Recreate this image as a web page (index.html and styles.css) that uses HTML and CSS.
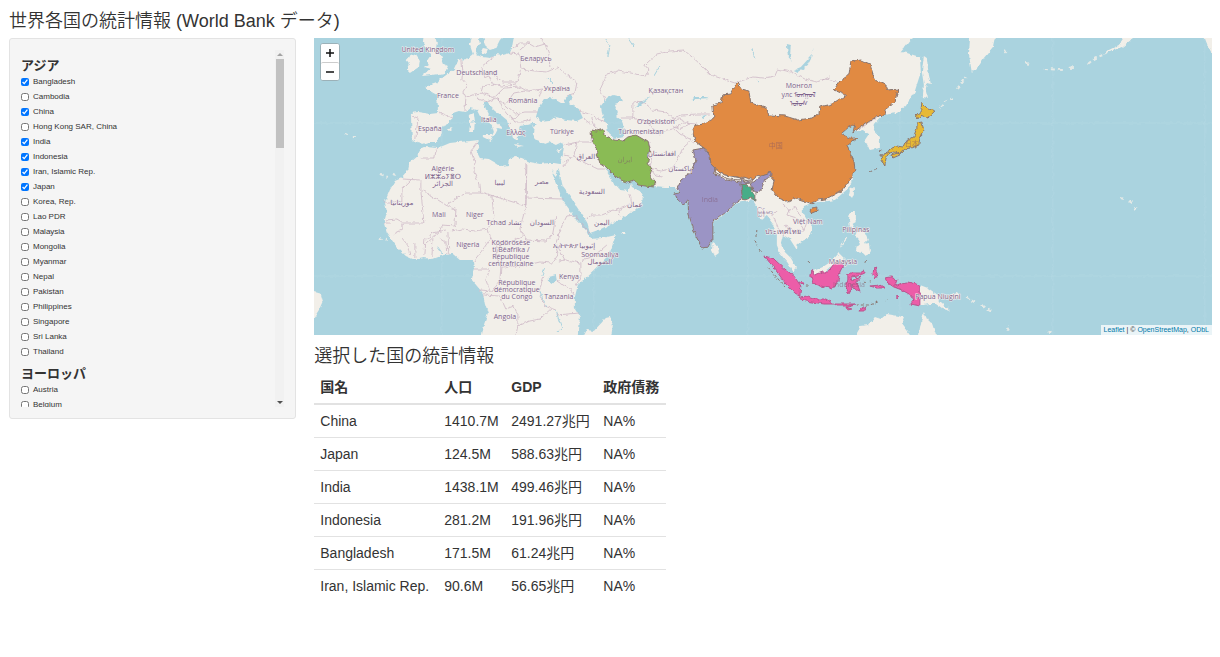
FILE: index.html
```
<!DOCTYPE html>
<html lang="ja">
<head>
<meta charset="utf-8">
<meta name="viewport" content="width=device-width, initial-scale=1">
<title>世界各国の統計情報</title>
<link rel="stylesheet" href="styles.css">
</head>
<body>
<h1 class="title">世界各国の統計情報 (World Bank データ)</h1>
<div class="layout">
  <form class="well">
    <div class="country-list">
      <fieldset class="region">
        <legend>アジア</legend>
        <label><input type="checkbox" checked>Bangladesh</label>
        <label><input type="checkbox">Cambodia</label>
        <label><input type="checkbox" checked>China</label>
        <label><input type="checkbox">Hong Kong SAR, China</label>
        <label><input type="checkbox" checked>India</label>
        <label><input type="checkbox" checked>Indonesia</label>
        <label><input type="checkbox" checked>Iran, Islamic Rep.</label>
        <label><input type="checkbox" checked>Japan</label>
        <label><input type="checkbox">Korea, Rep.</label>
        <label><input type="checkbox">Lao PDR</label>
        <label><input type="checkbox">Malaysia</label>
        <label><input type="checkbox">Mongolia</label>
        <label><input type="checkbox">Myanmar</label>
        <label><input type="checkbox">Nepal</label>
        <label><input type="checkbox">Pakistan</label>
        <label><input type="checkbox">Philippines</label>
        <label><input type="checkbox">Singapore</label>
        <label><input type="checkbox">Sri Lanka</label>
        <label><input type="checkbox">Thailand</label>
      </fieldset>
      <fieldset class="region">
        <legend>ヨーロッパ</legend>
        <label><input type="checkbox">Austria</label>
        <label><input type="checkbox">Belgium</label>
      </fieldset>
    </div>
    <div class="scrollbar" aria-hidden="true">
      <span class="arrow-up"></span>
      <span class="thumb"></span>
      <span class="arrow-down"></span>
    </div>
  </form>
  <main class="main">
    <div class="map">
      <svg class="map-canvas" viewBox="314 38 898 297" preserveAspectRatio="xMidYMid slice" role="img" aria-label="World map">
        <defs>
          <filter id="coast" filterUnits="userSpaceOnUse" x="304" y="28" width="918" height="317">
            <feTurbulence type="fractalNoise" baseFrequency="0.22" numOctaves="2" seed="4" result="noise"/>
            <feDisplacementMap in="SourceGraphic" in2="noise" scale="4" xChannelSelector="R" yChannelSelector="G"/>
          </filter>
        </defs>
        <g filter="url(#coast)">
        <g class="land">
          <path d="M411 113L412 140L418 143L422 144L428 142L437 142L442 134L441 131L446 124L453 118L453 113L459 111L465 112L470 108L477 110L480 116L487 121L492 125L494 132L492 136L495 135L498 129L502 130L502 127L495 121L489 115L486 109L484 103L487 101L489 105L494 110L501 115L507 120L509 127L512 132L513 138L518 140L518 135L522 134L519 129L520 126L526 125L532 124L534 128L533 134L537 141L545 144L550 142L556 145L562 142L564 147L563 154L560 164L554 163L548 163L540 164L530 162L522 158L514 157L509 160L508 166L502 167L496 163L489 159L480 158L477 152L480 146L477 143L479 140L470 141L459 142L450 143L438 148L425 147L421 149L417 156L410 162L408 171L402 178L395 181L390 190L385 202L387 212L384 223L387 233L397 247L406 256L415 260L424 258L433 259L444 255L453 254L460 260L473 260L474 267L472 280L483 293L485 304L488 313L484 325L482 335V345H579V335L580 316L575 308L575 297L578 285L597 267L606 258L611 250L616 235L603 238L590 239L586 230L577 221L570 210L563 201L559 190L551 170L556 176L559 169L563 187L570 196L577 207L587 222L590 233L601 229L613 223L624 217L633 212L640 205L644 198L640 191L632 187L631 183L629 191L620 190L618 187L614 184L609 174L605 168L612 172L623 182L633 180L639 186L653 186L665 187L674 187L682 195L687 200L690 215L695 233L703 248L711 243L713 223L725 214L737 203L753 200L757 207L762 220L767 216L773 224L777 235L777 245L780 253L788 263L793 272L796 267L791 258L785 252L781 243L783 235L790 239L797 250L798 243L809 238L812 228L803 213L803 206L812 203L835 200L850 187L855 168L851 158L844 147L857 138L848 137L841 133L848 127L855 125L853 132L863 130L869 134L865 140L870 150L880 148L880 137L874 130L875 124L883 115L897 113L906 106L915 91L921 72L920 57L907 53L901 52L913 37V28H514V37L512 48L510 53L503 55L496 54L490 58L482 57L477 55L475 50L480 43L479 37V28H472V37L470 45L473 54L467 59L458 60L454 69L445 76L440 79L437 83L425 87L430 91L437 95L438 106L438 113L430 114L418 112Z"/>
          <path d="M483 28V37L486 47L490 50L496 48L500 40L503 37V28ZM483 48L481 52L486 54L488 49ZM425 28L423 43L427 49L431 55L427 61L429 64L425 67L430 69L422 76L432 75L445 73L448 66L444 64L441 56L436 49L437 43L433 28ZM410 57L406 59L409 63L407 70L410 73L419 67L420 60L416 54Z"/>
          <path d="M470 115L474 113L475 121L470 122ZM471 123L475 122L474 132L469 132ZM483 135L493 135L491 141L483 137ZM515 144L524 146L518 147ZM556 151L563 148L559 152ZM447 129L454 128L449 131Z"/>
          <path d="M713 243L718 246L719 253L715 256L712 250ZM850 190L854 187L854 195L851 199L849 195ZM850 212L856 212L856 220L853 227L860 230L857 232L851 229L849 221ZM857 232L864 231L868 240L862 246L859 240L855 236ZM840 248L847 239L847 237L841 245ZM856 247L862 244L869 243L870 251L867 256L863 252L855 251ZM811 272L823 267L832 261L839 253L845 259L841 263L837 265L830 267L821 275L813 273Z"/>
          <path d="M924 56L927 58L929 75L931 84L927 83L926 90L928 98L923 97L924 85L922 72ZM971 28L969 54L972 73L979 66L984 58L993 47L997 28ZM856 345V335L861 326L869 325L875 317L881 319L887 314L904 317L902 323L911 335V345ZM919 345V335L922 318L924 312L928 321L932 323L936 335V345ZM920 285L928 288L938 295L940 301L951 311L943 309L936 304L929 304L920 306ZM947 296L957 292L960 295L954 299ZM304 292L314 292L321 294L323 301L319 310L314 318L304 318ZM579 345L587 330L594 331L606 318L610 317L613 325L610 345ZM1201 28L1222 28L1214 57L1208 46ZM1130 28L1119 45L1109 50L1104 55L1113 50L1122 47L1132 39L1143 28Z"/>
          <path class="islands" d="M940 108L945 102L953 98M957 89L966 77M1004 50L1007 53M1026 63L1029 64M1044 69L1064 70M1070 68L1074 67M1088 64L1094 59L1105 54M1121 198L1124 199M1129 201L1134 204M966 296L971 300L976 303M982 305L992 311M1007 327L1010 332M1048 333L1052 331M379 238L387 240M344 133L348 134M352 137L356 137M380 174L388 177M393 174L396 175"/>
          <path d="M1133 206L1138 208L1135 210ZM621 232L626 232L624 234Z"/>
        </g>
        <g class="water">
          <path d="M536 117L539 107L544 99L550 97L555 100L560 103L565 103L564 99L570 95L573 98L569 103L579 109L583 118L577 121L567 120L556 117L549 121L541 122Z"/>
          <path d="M601 106L607 98L613 95L621 97L623 101L615 104L618 112L616 117L622 121L625 129L624 137L615 139L608 133L607 124L603 117Z"/>
          <path d="M549 282L549 277L556 275L557 281L552 284ZM794 70L801 67L811 56L814 47L811 58L807 66L798 72ZM691 101L694 97L706 97L710 98L697 99ZM700 116L707 115L704 118ZM635 107L641 102L650 97L640 106ZM787 44L791 45L790 57L793 61L788 57ZM530 123L537 123L534 126Z"/>
          <path class="rivers" d="M540 291L544 301L548 307M556 310L559 320L562 328L558 332M438 247L443 254M606 39L610 46L608 57M628 38L634 47M548 78L554 84M545 268L542 276M654 76L660 66M752 49L755 58M756 79L760 83"/>
        </g>
        <g class="borders">
          <path d="M412 116L418 118L416 139M439 112L453 118M462 60L463 72L462 79L467 85L463 92L466 98L465 111M465 98L475 94L481 93L483 86L493 84L489 76L484 78L482 67L491 60L493 55M493 84L502 86L516 84L519 77L521 67L519 54L510 53M491 73L503 82L518 82M481 93L495 97L504 88L520 87L527 91L542 89L539 98M475 94L478 99L488 102L496 98L506 105L516 114L525 112L538 112M498 98L503 109L508 115L514 119L519 114M506 104L514 93L525 91M510 115L515 122L525 122L531 118M512 123L507 128M521 69L535 71L547 72L558 67L568 76L577 83L575 93L567 96M519 51L528 43L535 47L545 44L549 54L550 67M513 48L520 43L530 43M545 44L540 37M580 111L592 115L599 119L606 122M591 118L594 126L599 130M564 145L579 142L591 142L593 128M584 119L591 124M577 142L574 156L563 162M574 156L581 161L598 169L604 169M564 155L572 157L563 167M605 100L600 89L607 74L618 71L631 73L646 76L649 70L645 65L657 54L670 51L684 50L698 62L711 75L720 78L735 83"/>
          <path d="M735 83L753 77L764 78L775 76L778 69L791 72L805 79L817 82L830 77M633 118L633 102L645 103L653 110L666 112L673 118L682 115L697 114L710 114M621 118L633 118M633 118L645 121L653 128L660 134L667 130L673 129L684 123L697 124M675 129L680 134L690 139L695 143M649 142L652 156L650 168L656 176L662 177M650 168L661 171L671 169L678 159L683 148L692 140M670 120L680 119L690 124L679 129L673 126"/>
          <path d="M421 158L435 158L436 150L438 148M478 142L471 151L475 162L474 172L480 184L481 193M402 179L421 180L421 189L446 205L466 193L484 193L526 206L526 164M526 198L564 199M527 165L526 206L520 229L526 240L546 241L553 233L556 216M384 202L402 202L402 189L411 180M421 190L424 223L402 223L402 230L394 234M402 222L397 219L386 220M446 205L456 210L455 226L443 225L437 234L425 245M425 238L424 256M448 231L449 255M415 243L415 258M433 239L432 257M440 238L446 242L447 254M451 231L463 229L475 231L488 229L491 238L484 248L474 261M492 195L494 217L488 229M491 238L498 247L512 241L523 236M500 245L495 256L501 267L523 266L540 262L552 263L558 254L556 246M501 267L500 281L492 292L483 293M474 269L490 269L486 280L490 291L480 290M483 295L500 296L506 309L514 306L518 315L518 326L530 321L540 319L552 308M518 326L516 335M544 276L539 292L545 306L556 310M557 315L579 313M557 281L571 290L575 296M581 263L581 276L576 286M559 261L566 260L580 263L585 259L594 256L607 245M567 216L562 226L556 243L565 260M567 216L575 215L590 234M587 218L592 215L602 215L619 208L620 217M620 209L632 204L630 193M384 223L390 223M402 238L407 244L410 255M427 240L432 233L446 230"/>
          <path d="M778 210L773 215L778 228L784 235M783 204L790 210L796 207L799 214L807 222L804 231L796 231L785 226M790 210L787 215L797 218L804 230M820 81L825 79L837 81M860 129L873 120L881 115"/>
        </g>
        <g class="tile-seams"><path d="M304 123H1222M304 276H1222M442 28V345M594 28V345M748 28V345M900 28V345M1053 28V345M1205 28V345"/></g>
        <g class="selected">
          <path class="china" d="M692 130L694 126L703 124L714 118L713 105L721 103L723 95L730 94L735 86L738 83L742 89L749 91L751 103L766 108L769 115L785 116L798 120L812 118L819 114L820 107L832 104L846 95L834 90L840 81L849 75L851 62L861 60L870 64L875 80L886 85L888 90L898 89L895 102L887 107L885 115L877 116L870 121L858 129L853 133L855 124L849 127L841 134L850 138L857 138L847 146L854 160L855 170L850 180L841 191L826 199L818 200L812 204L805 201L796 198L788 202L779 198L772 190L775 179L766 174L757 176L753 180L741 178L726 175L715 169L709 162L707 150L696 142Z"/>
          <path class="china" d="M812 208L817 207L817 211L812 213L810 210Z"/>
          <path class="india" d="M693 150L704 148L709 154L710 163L715 168L714 173L726 180L741 182L742 179L745 182L754 182L762 175L771 172L771 176L765 180L761 190L757 193L753 190L750 183L743 184L741 189L744 197L737 202L725 213L713 222L713 239L708 247L702 248L696 236L689 215L688 201L683 204L676 198L674 194L680 193L677 188L681 180L690 174L696 160Z"/>
          <path class="gap" d="M715 169L726 175L741 178L740 180L728 179L715 172ZM744 177L753 180L751 181L744 180Z"/>
          <path class="bangladesh" d="M741 183L745 184L748 187L753 187L752 192L755 194L755 202L752 197L744 200L742 194Z"/>
          <path class="iran" d="M591 130L597 131L604 129L605 135L614 140L623 141L628 137L636 135L648 142L650 148L648 163L652 169L650 175L656 182L653 187L638 185L634 180L628 182L621 180L613 174L606 167L600 163L597 153L596 146L592 139Z"/>
          <path class="japan" d="M922 102L929 109L935 111L931 115L927 118L921 115L918 119L916 115L921 111ZM917 123L922 122L924 131L920 139L919 145L912 148L905 149L900 154L895 152L889 153L886 159L885 165L882 160L881 155L887 153L890 149L897 146L903 147L906 141L914 137L917 129ZM891 155L898 153L900 155L893 158Z"/>
          <path class="indonesia" d="M765 256L774 259L785 269L794 276L801 286L800 296L795 293L786 284L778 273ZM799 297L808 296L816 299L826 299L834 304L824 304L806 301ZM812 270L815 275L823 272L828 272L834 264L839 261L843 266L840 272L838 282L833 289L821 286L813 283L811 276ZM848 275L851 273L860 273L865 270L865 273L858 276L851 277L852 281L861 277L857 282L860 291L855 289L851 284L852 289L849 294L846 287L848 280ZM885 278L891 277L897 280L895 286L902 283L908 282L920 285L920 306L911 304L914 300L911 295L902 290L894 287L888 283ZM874 268L877 266L876 271L878 275L875 279L873 275ZM870 286L880 285L885 288L877 288ZM835 304L846 304L855 304L848 306L837 306ZM859 311L866 306L863 311ZM846 307L852 309L848 310ZM897 295L899 297L897 299ZM799 282L803 283L802 285Z"/>
          <path class="small-isles" d="M757 229L756 238M755 240L758 247L761 252M768 267L774 274L780 281L785 287M806 285L811 285M808 261L810 263M870 172L878 168M881 149L880 158M864 281L870 282M886 301L888 300M856 305L870 305L878 302M867 260L866 263"/>
        </g>
        </g>
        <g class="labels">
          <text x="428" y="52">United Kingdom</text><text x="477" y="75">Deutschland</text><text x="448" y="98">France</text><text x="430" y="131">España</text><text x="489" y="122">Italia</text><text x="516" y="135">Ελλάς</text><text x="523" y="103">România</text><text x="536" y="61">Беларусь</text><text x="557" y="91">Україна</text><text x="562" y="134">Türkiye</text><text x="666" y="93">Қазақстан</text><text x="656" y="124">O‘zbekiston</text><text x="641" y="134">Türkmenistan</text><text x="799" y="88">Монгол</text><text x="799" y="97">улс ᠮᠣᠩᠭᠣᠯ</text><text x="799" y="106">ᠤᠯᠤᠰ</text>
          <text x="443" y="171">Algérie</text><text x="443" y="179">ⵍⵣⵣⴰⵢⴻⵔ</text><text x="443" y="186">الجزائر</text><text x="500" y="185">ليبيا</text><text x="542" y="184">مصر</text><text x="402" y="205">موريتانيا</text><text x="439" y="217">Mali</text><text x="475" y="217">Niger</text><text x="504" y="225">Tchad تشاد</text><text x="542" y="225">السودان</text><text x="468" y="247">Nigeria</text><text x="511" y="245">Ködörösêse</text><text x="511" y="252">tî Bêafrîka /</text><text x="511" y="259">République</text><text x="511" y="266">centrafricaine</text><text x="517" y="285">République</text><text x="517" y="292">démocratique</text><text x="517" y="299">du Congo</text><text x="505" y="319">Angola</text><text x="569" y="279">Kenya</text><text x="559" y="299">Tanzania</text><text x="574" y="248">ኢትዮጵያ إثيوبيا</text><text x="600" y="257">Soomaaliya</text><text x="600" y="264">الصومال</text><text x="592" y="194">السعودية</text><text x="635" y="207">عمان</text><text x="602" y="225">اليمن</text><text x="586" y="159">العراق</text><text x="662" y="156">افغانستان</text><text x="680" y="171">پاکستان</text>
          <text x="765" y="214">မြန်မာ</text><text x="783" y="234">ประเทศไทย</text><text x="808" y="224">Việt Nam</text><text x="856" y="232">Pilipinas</text><text x="843" y="264">Malaysia</text><text x="938" y="299">Papua Niugini</text>
          <text class="muted" x="776" y="148">中国</text><text class="muted" x="710" y="202">India</text><text class="muted" x="625" y="162">ایران</text><text class="muted" x="849" y="287">Indonesia</text><text class="muted" x="912" y="146">日本</text>
        </g>
      </svg>
      <div class="zoom-control">
        <button type="button" aria-label="Zoom in"><svg viewBox="0 0 8 8"><path d="M4 0V8M0 4H8"/></svg></button>
        <button type="button" aria-label="Zoom out"><svg viewBox="0 0 8 8"><path d="M0 4H8"/></svg></button>
      </div>
      <div class="attribution"><a href="#leaflet">Leaflet</a> | © <a href="#osm">OpenStreetMap</a>, <a href="#odbl">ODbL</a></div>
    </div>
    <h2 class="subtitle">選択した国の統計情報</h2>
    <table class="stats">
      <colgroup><col class="col-name"><col class="col-pop"><col class="col-gdp"><col class="col-debt"></colgroup>
      <thead><tr><th scope="col">国名</th><th scope="col">人口</th><th scope="col">GDP</th><th scope="col">政府債務</th></tr></thead>
      <tbody>
        <tr><td>China</td><td>1410.7M</td><td>2491.27兆円</td><td>NA%</td></tr>
        <tr><td>Japan</td><td>124.5M</td><td>588.63兆円</td><td>NA%</td></tr>
        <tr><td>India</td><td>1438.1M</td><td>499.46兆円</td><td>NA%</td></tr>
        <tr><td>Indonesia</td><td>281.2M</td><td>191.96兆円</td><td>NA%</td></tr>
        <tr><td>Bangladesh</td><td>171.5M</td><td>61.24兆円</td><td>NA%</td></tr>
        <tr><td>Iran, Islamic Rep.</td><td>90.6M</td><td>56.65兆円</td><td>NA%</td></tr>
      </tbody>
    </table>
  </main>
</div>
</body>
</html>
```
FILE: styles.css
```
* { box-sizing: border-box; }

body {
  margin: 0;
  padding: 9px 8px 0 9px;
  background: #fff;
  color: #333;
  font-family: "Liberation Sans", "Noto Sans CJK JP", sans-serif;
  font-size: 14px;
}

.title, .subtitle {
  margin: 0;
  font-size: 18px;
  font-weight: 350;
  line-height: 24px;
}

.title { margin-bottom: 5px; }
.subtitle { margin-top: 9px; }

.layout {
  display: grid;
  grid-template-columns: 24fr 75fr;
  gap: 18px;
  align-items: start;
}

/* Country selector */
.well {
  display: flex;
  padding: 11px;
  background: #f5f5f5;
  border: 1px solid #e3e3e3;
  border-radius: 3px;
}

.country-list {
  flex: 1;
  height: 357px;
  overflow-y: auto;
  scrollbar-width: none;
}

.region {
  margin: 0;
  padding: 0 0 7px;
  border: 0;
}

.region legend {
  padding: 0;
  font-size: 13px;
  font-weight: 700;
  line-height: 16px;
}

.region:first-child legend { padding-top: 8px; }

.region label {
  display: flex;
  align-items: center;
  gap: 4px;
  height: 15px;
  font-size: 8px;
}

.region input {
  width: 8px;
  height: 8px;
  margin: 0;
}

.scrollbar {
  display: flex;
  flex-direction: column;
  align-items: center;
  width: 9px;
  background: #f1f1f1;
}

.thumb {
  width: 8px;
  height: 89px;
  background: #c1c1c1;
}

.arrow-up {
  margin: 3px 0;
  border: 3px solid transparent;
  border-top: 0;
  border-bottom-color: #a3a3a3;
}

.arrow-down {
  margin: auto 0 3px;
  border: 3px solid transparent;
  border-bottom: 0;
  border-top-color: #505050;
}

/* Map */
.main { min-width: 0; }

.map {
  position: relative;
  overflow: hidden;
  background: #aad3df;
}

.map-canvas {
  display: block;
  width: 100%;
  height: 297px;
}

.land path { fill: #f2efe9; }
.land .islands { fill: none; stroke: #f2efe9; stroke-width: 2; stroke-dasharray: 4 3; opacity: .8; }
.water path { fill: #aad3df; }
.water .rivers { fill: none; stroke: #aad3df; stroke-width: 1; }
.borders path { fill: none; stroke: #c9b1c2; stroke-width: 1; opacity: .7; }
.selected path { stroke: #8a7670; stroke-width: 1; stroke-linejoin: round; }
.selected .china { fill: #e18a43; }
.selected .india { fill: #9b94c5; }
.selected .gap { fill: #f2efe9; }
.selected .bangladesh { fill: #47ad88; }
.selected .iran { fill: #8abb55; }
.selected .japan { fill: #e6b935; }
.selected .indonesia { fill: #ec5da8; stroke: #b8568e; }
.selected .small-isles { fill: none; stroke-dasharray: 3 2; }
.tile-seams path { fill: none; stroke: #fff; stroke-width: 1; opacity: .08; }

.labels text {
  fill: #7b6188;
  stroke: #f5f2f0;
  stroke-width: 1px;
  paint-order: stroke;
  font-family: "Open Sans", "Noto Sans", "DejaVu Sans", "Noto Sans CJK JP", sans-serif;
  font-size: 7px;
  text-anchor: middle;
}

.labels .muted { fill: #7b4f68; stroke: none; opacity: .5; }

.zoom-control {
  position: absolute;
  top: 5px;
  left: 6px;
  width: 20px;
  border: 1px solid #9bb1b8;
  border-radius: 3px;
  background: #fff;
}

.zoom-control button {
  display: grid;
  place-items: center;
  width: 18px;
  height: 18px;
  padding: 0;
  border: 0;
  border-radius: 2px;
  background: #fff;
}

.zoom-control button + button { border-top: 1px solid #ccc; }
.zoom-control svg { width: 8px; height: 8px; fill: none; stroke: #111; stroke-width: 1.5; }

.attribution {
  position: absolute;
  right: 0;
  bottom: 0;
  padding: 0 3px;
  background: rgba(255, 255, 255, .75);
  font-size: 7px;
  line-height: 10px;
}

.attribution a { color: #0078a8; text-decoration: none; }

/* Statistics */
.stats {
  border-collapse: collapse;
  table-layout: fixed;
  width: 352px;
}

.col-name { width: 124px; }
.col-pop { width: 67px; }
.col-gdp { width: 92px; }
.col-debt { width: 69px; }

.stats th, .stats td {
  height: 33px;
  padding: 0 6px;
  line-height: 20px;
  text-align: left;
  white-space: nowrap;
}

.stats th { height: 36px; padding-top: 2px; border-bottom: 2px solid #e2e2e2; }
.stats td { border-bottom: 1px solid #e2e2e2; }
.stats tr:last-child td { border-bottom: 0; }
```
